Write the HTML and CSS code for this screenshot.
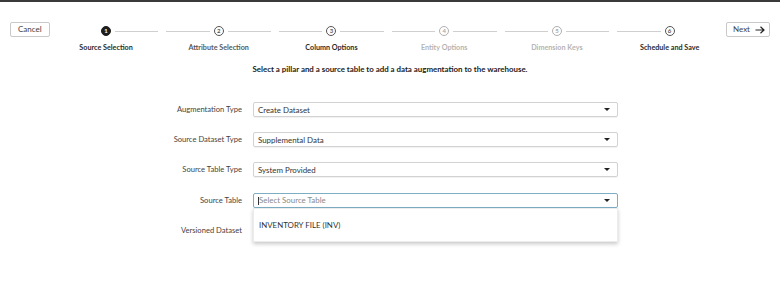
FILE: index.html
```html
<!DOCTYPE html>
<html lang="en">
<head>
    <meta charset="UTF-8">
    <title>Add Data Augmentation</title>
    <link rel="stylesheet" href="styles.css">
</head>
<body>
    <div class="topbar">
        <button class="btn">Cancel</button>
        <div class="steps">
            <div class="step done">
                <div class="track"><span class="line blank"></span><span class="dot">1</span><span class="line"></span></div>
                <div class="step-label">Source Selection</div>
            </div>
            <div class="step">
                <div class="track"><span class="line"></span><span class="dot">2</span><span class="line"></span></div>
                <div class="step-label mid">Attribute Selection</div>
            </div>
            <div class="step">
                <div class="track"><span class="line"></span><span class="dot">3</span><span class="line"></span></div>
                <div class="step-label">Column Options</div>
            </div>
            <div class="step off">
                <div class="track"><span class="line"></span><span class="dot">4</span><span class="line"></span></div>
                <div class="step-label">Entity Options</div>
            </div>
            <div class="step off">
                <div class="track"><span class="line"></span><span class="dot">5</span><span class="line"></span></div>
                <div class="step-label">Dimension Keys</div>
            </div>
            <div class="step">
                <div class="track"><span class="line"></span><span class="dot">6</span><span class="line blank"></span></div>
                <div class="step-label">Schedule and Save</div>
            </div>
        </div>
        <button class="btn next">Next
            <svg class="arrow" width="10" height="8" viewBox="0 0 10 8"><path d="M0.5 4H9M5.5 0.8L9 4L5.5 7.2" fill="none" stroke="#222" stroke-width="1.2"/></svg>
        </button>
    </div>

    <p class="intro">Select a pillar and a source table to add a data augmentation to the warehouse.</p>

    <div class="form">
        <label>Augmentation Type</label>
        <div class="select"><span>Create Dataset</span><i class="caret"></i></div>

        <label>Source Dataset Type</label>
        <div class="select"><span>Supplemental Data</span><i class="caret"></i></div>

        <label>Source Table Type</label>
        <div class="select"><span>System Provided</span><i class="caret"></i></div>

        <label>Source Table</label>
        <div class="select focus">
            <span class="placeholder"><b class="cursor"></b>Select Source Table</span><i class="caret"></i>
            <div class="menu">
                <div class="option">INVENTORY FILE (INV)</div>
            </div>
        </div>

        <label>Versioned Dataset</label>
        <div class="select hidden"></div>
    </div>
</body>
</html>
```

FILE: styles.css
```css
body { font-family: Lato, "Open Sans", sans-serif; margin: 0; padding: 0 10px; background: #fff; color: #333; border-top: 2px solid #3a3a3a; height: 284px; overflow: hidden; }
.topbar { display: flex; align-items: flex-start; padding-top: 20px; }
.btn { height: 15px; padding: 0 7px; background: #fff; border: 1px solid #c9c9c9; border-radius: 2px; font-family: inherit; font-size: 8px; color: #444; line-height: 13px; }
.btn.next { width: 44px; padding: 0 0 0 2px; display: flex; align-items: center; justify-content: center; gap: 5px; }
.arrow { display: block; }
.steps { flex: 1; display: flex; }
.step { flex: 1; display: flex; flex-direction: column; align-items: center; }
.track { display: flex; align-items: center; width: 100%; margin-top: 4px; }
.line { flex: 1; height: 1px; background: #cfcfcf; margin: 0 4px; }
.line.blank { background: transparent; }
.dot { width: 8px; height: 8px; border: 1px solid #555; border-radius: 50%; font-size: 6px; line-height: 8px; text-align: center; color: #555; font-weight: bold; }
.step.done .dot { background: #1d1d1d; border-color: #1d1d1d; color: #fff; }
.step.off .dot { border-color: #b0b0b0; color: #a8a8a8; }
.step-label { margin-top: 7px; font-size: 7.2px; font-weight: bold; color: #2b2b2b; white-space: nowrap; }
.step-label.mid { color: #5a5a5a; }
.step.off .step-label { color: #b4b4b4; }
.intro { margin: 12px 0 0; text-align: center; font-size: 7.9px; line-height: 10px; font-weight: bold; color: #222; }
.form { display: grid; grid-template-columns: 232px 365px; column-gap: 11px; row-gap: 15.2px; margin-top: 28px; align-items: center; }
.form label { text-align: right; font-size: 7.6px; color: #444; line-height: 9px; }
.select { position: relative; height: 15px; box-sizing: border-box; border: 1px solid #d2d2d2; border-radius: 2px; display: flex; align-items: center; padding: 0 7px 0 4px; font-size: 7.9px; color: #333; box-shadow: 0 1px 1px rgba(0,0,0,0.06); }
.select span { flex: 1; }
.select.focus { border-color: #7eaec4; }
.select.hidden { border-color: transparent; box-shadow: none; }
.placeholder { color: #8a8a8a; }
.cursor { display: inline-block; width: 1px; height: 8px; background: #333; vertical-align: middle; }
.caret { width: 0; height: 0; border-left: 3px solid transparent; border-right: 3px solid transparent; border-top: 3px solid #222; }
.menu { position: absolute; top: 14px; left: -1px; right: -1px; height: 32px; background: #fff; border: 1px solid #ececec; box-shadow: 0 2px 4px rgba(0,0,0,0.22); display: flex; align-items: center; }
.option { padding-left: 5px; font-size: 7.9px; color: #333; }
```
